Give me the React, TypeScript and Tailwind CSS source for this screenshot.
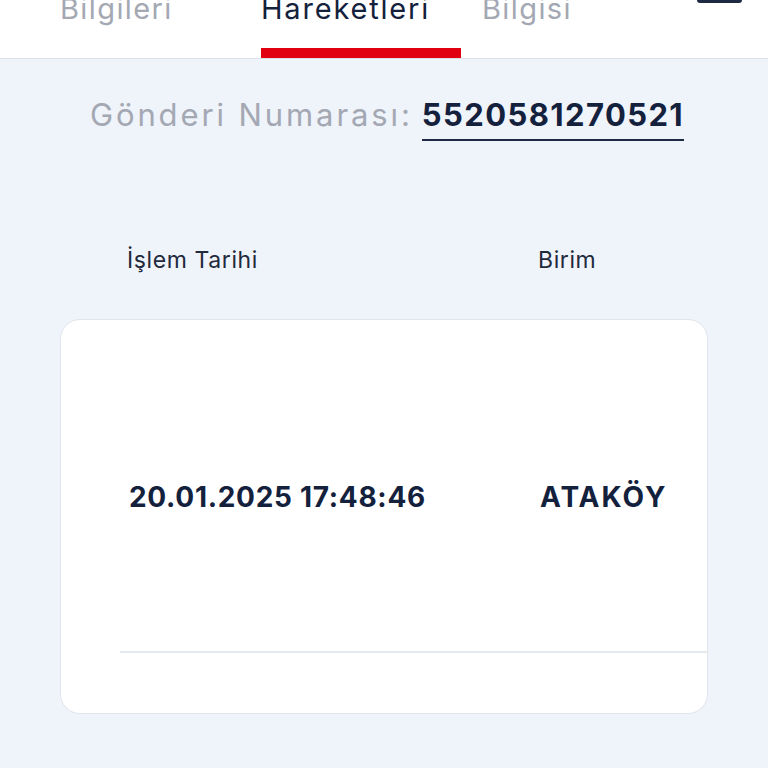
const tabs = [
  { label: "Bilgileri", active: false },
  { label: "Hareketleri", active: true },
  { label: "Bilgisi", active: false },
];

const movements = [{ date: "20.01.2025 17:48:46", unit: "ATAKÖY" }];

export default function App() {
  return (
    <div
      className="min-h-[768px] w-[768px] overflow-hidden bg-[#eff3fa]"
      style={{ fontFamily: "Inter, 'Noto Sans', sans-serif" }}
    >
      {/* tab header */}
      <div className="relative flex h-[59px] border-b border-[#dcdfe5] bg-white">
        <div className="ml-[60px] w-[201px]">
          <div className="-mt-[6px] text-[29px] leading-[30px] tracking-[1.4px] text-[#a3a8b3]">
            {tabs[0].label}
          </div>
        </div>
        <div className="flex w-[200px] flex-col">
          <div className="-mt-[6px] text-[29px] leading-[30px] tracking-[1.8px] text-[#14213d]">
            {tabs[1].label}
          </div>
          <div className="mt-auto h-[10px] bg-[#e0000f]" />
        </div>
        <div className="ml-[21px]">
          <div className="-mt-[6px] text-[29px] leading-[30px] tracking-[1.4px] text-[#a3a8b3]">
            {tabs[2].label}
          </div>
        </div>
        <div className="ml-auto mr-[26px] h-[3px] w-[45px] rounded-b-[6px] bg-[#1e2a44]" />
      </div>

      {/* shipment number */}
      <div className="mt-[36px] flex items-start justify-center pl-[6px]">
        <span className="text-[31px] leading-[40px] tracking-[2.9px] text-[#a3a8b3]">
          Gönderi Numarası:
        </span>
        <span className="ml-[9px] border-b-2 border-[#1e2a44] pb-[4px] text-[31px] font-bold leading-[40px] tracking-[1.4px] text-[#14213d]">
          5520581270521
        </span>
      </div>

      {/* column headings */}
      <div className="mt-[104px] grid grid-cols-[411px_1fr] pl-[127px] text-[23px] leading-[30px] tracking-[0.6px] text-[#1f2a3d]">
        <div>İşlem Tarihi</div>
        <div>Birim</div>
      </div>

      {/* movements card */}
      <div className="mx-[60px] mt-[44px] h-[395px] rounded-[20px] border border-[#e1e4ea] bg-white">
        {movements.map((m) => (
          <div
            key={m.date}
            className="ml-[59px] grid h-[333px] grid-cols-[411px_1fr] items-center border-b-2 border-[#e6e9ee] pl-[9px] pt-[22px] text-[28px] font-bold text-[#14213d]"
          >
            <div className="tracking-[0.7px]">{m.date}</div>
            <div className="tracking-[2px]">{m.unit}</div>
          </div>
        ))}
      </div>
    </div>
  );
}
